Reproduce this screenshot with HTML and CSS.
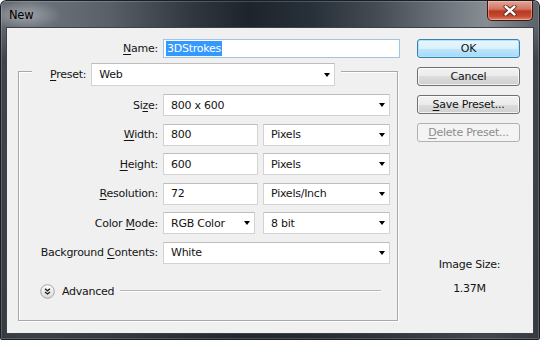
FILE: index.html
```html
<!DOCTYPE html>
<html lang="en">
<head>
    <meta charset="UTF-8">
    <meta name="viewport" content="width=device-width, initial-scale=1.0">
    <title>New</title>
    <link rel="stylesheet" href="styles.css">
</head>
<body>
    <div class="window">
        <div class="titlebar">
            <span class="title">New</span>
            <span class="close">
                <svg width="14" height="11" viewBox="0 0 14 11">
                    <path d="M2.5 1.5 L11.5 9.5 M11.5 1.5 L2.5 9.5" stroke="#4a1a12" stroke-width="4" stroke-linecap="round"/>
                    <path d="M2.5 1.5 L11.5 9.5 M11.5 1.5 L2.5 9.5" stroke="#fff" stroke-width="2.4" stroke-linecap="round"/>
                </svg>
            </span>
        </div>

        <div class="client">
            <div class="form">
                <div class="name-row">
                    <label class="label"><u>N</u>ame:</label>
                    <div class="textbox focused"><span class="sel">3DStrokes</span></div>
                </div>

                <div class="group">
                    <div class="group-head">
                        <label class="label"><u>P</u>reset:</label>
                        <div class="dropdown preset"><span>Web</span><i class="arrow"></i></div>
                    </div>

                    <div class="fields">
                        <label class="label">Si<u>z</u>e:</label>
                        <div class="dropdown"><span>800 x 600</span><i class="arrow"></i></div>

                        <label class="label"><u>W</u>idth:</label>
                        <div class="pair">
                            <div class="textbox num">800</div>
                            <div class="dropdown unit"><span>Pixels</span><i class="arrow"></i></div>
                        </div>

                        <label class="label"><u>H</u>eight:</label>
                        <div class="pair">
                            <div class="textbox num">600</div>
                            <div class="dropdown unit"><span>Pixels</span><i class="arrow"></i></div>
                        </div>

                        <label class="label"><u>R</u>esolution:</label>
                        <div class="pair">
                            <div class="textbox num">72</div>
                            <div class="dropdown unit"><span>Pixels/Inch</span><i class="arrow"></i></div>
                        </div>

                        <label class="label">Color <u>M</u>ode:</label>
                        <div class="pair wide-gap">
                            <div class="dropdown mode"><span>RGB Color</span><i class="arrow"></i></div>
                            <div class="dropdown unit"><span>8 bit</span><i class="arrow"></i></div>
                        </div>

                        <label class="label">Background <u>C</u>ontents:</label>
                        <div class="dropdown"><span>White</span><i class="arrow"></i></div>
                    </div>

                    <div class="advanced">
                        <svg class="adv-icon" width="15" height="15" viewBox="0 0 15 15">
                            <defs>
                                <linearGradient id="advFill" x1="0" y1="0" x2="0" y2="1">
                                    <stop offset="0" stop-color="#ffffff"/>
                                    <stop offset="1" stop-color="#d9d9d9"/>
                                </linearGradient>
                            </defs>
                            <circle cx="7.5" cy="7.5" r="6.8" fill="url(#advFill)" stroke="#a3a3a3"/>
                            <path d="M5 4.8 L7.5 6.8 L10 4.8 M5 8 L7.5 10 L10 8" fill="none" stroke="#1e1e1e" stroke-width="1.3"/>
                        </svg>
                        <span>Advanced</span>
                        <span class="rule"></span>
                    </div>
                </div>
            </div>

            <div class="side">
                <button class="btn default">OK</button>
                <button class="btn">Cancel</button>
                <button class="btn"><u>S</u>ave Preset...</button>
                <button class="btn" disabled><u>D</u>elete Preset...</button>

                <div class="info">
                    <div>Image Size:</div>
                    <div>1.37M</div>
                </div>
            </div>
        </div>
    </div>
</body>
</html>
```

FILE: styles.css
```css
:root {
    --client-bg: #f0f0f0;
    --text: #141414;
    --field-border: #d3d3d3;
    --group-line: #a8a8a8;
}

body {
    margin: 0;
    font-family: "DejaVu Sans", Tahoma, sans-serif;
    font-size: 11px;
    letter-spacing: -0.25px;
    color: var(--text);
}

.window {
    width: 540px;
    height: 340px;
    box-sizing: border-box;
    padding: 0 7px 7px 7px;
    display: flex;
    flex-direction: column;
    border-radius: 6px 6px 2px 2px;
    background:
        radial-gradient(ellipse 40px 14px at 22px 15px, rgba(200, 205, 210, 0.55), rgba(200, 205, 210, 0) 100%),
        linear-gradient(180deg, rgba(30, 36, 42, 0) 0, rgba(30, 36, 42, 0) 26px, rgba(36, 41, 47, 0.55) 60px, rgba(36, 41, 47, 0.7) 100%),
        linear-gradient(90deg, #5f656c 0%, #6f757c 6%, #5a6068 20%, #2f363e 36%, #1d242c 46%, #283039 58%, #454c54 70%, #737a81 84%, #878d93 90%, #5b6168 100%);
    box-shadow: inset 0 0 0 1px #1b1f24, inset 0 0 0 2px rgba(255, 255, 255, 0.18);
}

.titlebar {
    height: 28px;
    display: flex;
    justify-content: space-between;
    align-items: flex-start;
}

.title {
    margin-top: 8px;
    padding-left: 2px;
    line-height: 15px;
    font-size: 11.5px;
    color: #000;
}

.close {
    width: 46px;
    height: 20px;
    margin-top: 1px;
    box-sizing: border-box;
    display: flex;
    justify-content: center;
    align-items: center;
    border: 1px solid #3d1711;
    border-top: none;
    border-radius: 0 0 5px 5px;
    background: linear-gradient(180deg, #e6a493 0%, #d27a66 40%, #b83a23 55%, #c5492f 80%, #e08a6c 100%);
    box-shadow: inset 0 0 0 1px rgba(255, 210, 200, 0.45);
}

.client {
    flex: 1;
    display: flex;
    gap: 17px;
    padding: 11px 13px 0 11px;
    background: var(--client-bg);
    box-shadow: 0 0 0 1px #3c4249;
}

.form {
    width: 382px;
}

.label {
    text-align: right;
    white-space: nowrap;
}

u {
    text-decoration-thickness: 1px;
    text-underline-offset: 2px;
}

.name-row {
    display: grid;
    grid-template-columns: 140px 237px;
    column-gap: 5px;
    align-items: center;
    height: 19px;
}

.textbox,
.dropdown {
    box-sizing: border-box;
    height: 22px;
    background: #fff;
    border: 1px solid var(--field-border);
    border-top-color: #bdbdbd;
    display: flex;
    align-items: center;
    white-space: nowrap;
}

.textbox {
    padding-left: 7px;
}

.textbox.focused {
    height: 19px;
    padding-left: 2px;
    border-color: #9ec4e8;
}

.sel {
    background: #3399ff;
    color: #fff;
    padding: 1px;
    line-height: 13px;
}

.dropdown {
    justify-content: space-between;
    padding: 0 4px 0 7px;
}

.arrow {
    width: 0;
    height: 0;
    border-left: 3.5px solid transparent;
    border-right: 3.5px solid transparent;
    border-top: 4px solid #000;
}

.group {
    box-sizing: border-box;
    width: 380px;
    height: 250px;
    margin-top: 13px;
    border: 1px solid var(--group-line);
    box-shadow: inset 1px 1px 0 #fff, 1px 1px 0 #fff;
}

.group-head {
    display: flex;
    align-items: center;
    gap: 5px;
    width: fit-content;
    margin: -9px 0 0 13px;
    padding: 0 6px 0 18px;
    background: var(--client-bg);
}

.dropdown.preset {
    width: 244px;
    height: 23px;
}

.fields {
    display: grid;
    grid-template-columns: 139px 227px;
    grid-auto-rows: 22px;
    column-gap: 5px;
    row-gap: 7.5px;
    align-items: center;
    margin-top: 8px;
}

.pair {
    display: flex;
    gap: 5px;
}

.pair.wide-gap {
    gap: 8px;
}

.textbox.num {
    width: 95px;
}

.dropdown.mode {
    width: 92px;
}

.dropdown.unit {
    flex: 1;
}

.advanced {
    display: flex;
    align-items: center;
    height: 15px;
    margin-top: 20px;
    padding: 0 16px 0 21px;
}

.adv-icon {
    margin-right: 7px;
}

.rule {
    flex: 1;
    margin-left: 6px;
    border-top: 1px solid #b4b4b4;
    border-bottom: 1px solid #fff;
}

.side {
    width: 103px;
    display: flex;
    flex-direction: column;
    gap: 9px;
}

.btn {
    height: 19px;
    padding: 0;
    font: inherit;
    letter-spacing: inherit;
    color: var(--text);
    border: 1px solid #707070;
    border-radius: 3px;
    background: linear-gradient(180deg, #f2f2f2 0%, #ebebeb 50%, #dddddd 50%, #cfcfcf 100%);
    box-shadow: inset 0 0 0 1px rgba(255, 255, 255, 0.75);
}

.btn.default {
    border-color: #3c7fb1;
    background: linear-gradient(180deg, #eaf6fd 0%, #d9f0fc 50%, #bee6fd 50%, #a7d9f5 100%);
    box-shadow: inset 0 0 0 1px #a8e6fb;
}

.btn:disabled {
    color: #8d8d8d;
    border-color: #adb2b5;
    background: #f4f4f4;
    box-shadow: none;
}

.info {
    margin-top: 107px;
    display: flex;
    flex-direction: column;
    align-items: center;
    gap: 10px;
    line-height: 14px;
    padding-left: 2px;
}
```
